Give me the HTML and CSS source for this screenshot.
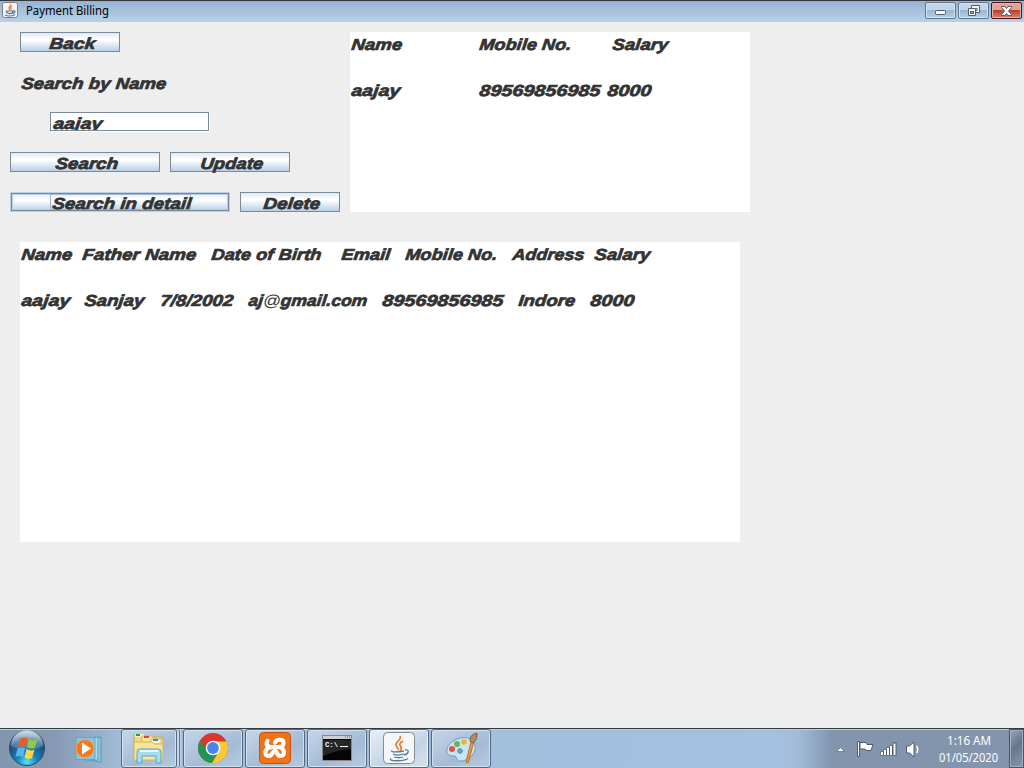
FILE: index.html
```html
<!DOCTYPE html>
<html lang="en">
<head>
<meta charset="utf-8">
<title>Payment Billing</title>
<link rel="stylesheet" href="styles.css">
</head>
<body>
<div class="screen">
  <header class="titlebar">
    <svg class="app-icon" width="16" height="16" viewBox="0 0 32 32"><rect x="1" y="1" width="30" height="30" rx="4" fill="#f3f4f5" stroke="#75818c" stroke-width="2"/><path d="M17 4c3 4-5 6-3 9l2 4M20 8c-4 3-4 4-1 7" fill="none" stroke="#ef7d22" stroke-width="2.5"/><path d="M8 18h14c0 7-12 7-14 0M22 18c6-1 5 4-1 5M6 26c6 3 15 2 20-1" fill="none" stroke="#537c9c" stroke-width="2.4"/></svg>
    <svg class="title" width="90" height="20"><text x="0" y="14" textLength="83" lengthAdjust="spacingAndGlyphs">Payment Billing</text></svg>
    <div class="window-buttons">
      <span class="wbtn"><svg width="31" height="17"><rect x="10.5" y="8.5" width="10" height="4" rx="1" fill="#f7f7f7" stroke="#525d6c"/></svg></span>
      <span class="wbtn"><svg width="31" height="17"><path d="M13.500 3.500h8v7h-8z" fill="#f7f7f7" stroke="#525d6c"/><path d="M16 6.500h3v2h-3" fill="none" stroke="#525d6c"/><path d="M10.500 6.500h7v7h-7z" fill="#f7f7f7" stroke="#525d6c"/><rect x="12.500" y="9.500" width="3" height="2" fill="#9ebbd8" stroke="#525d6c"/></svg></span>
      <span class="wbtn close"><svg width="31" height="17"><path d="M10.500 4.500h3.500l1.500 2 1.500-2h3.500v1l-3 3.500 3 3.500v1H17l-1.500-2-1.500 2h-3.500v-1l3-3.500-3-3.500z" fill="#f8f8f8" stroke="#575665"/></svg></span>
    </div>
  </header>

  <main class="content">
    <div class="top">
      <section class="controls">
        <div class="btn back"><svg class="label" width="98" height="18"><text x="28" y="16" textLength="46" lengthAdjust="spacingAndGlyphs">Back</text></svg></div>
        <svg class="label caption" width="160" height="23"><text x="0" y="17" textLength="145" lengthAdjust="spacingAndGlyphs">Search by Name</text></svg>
        <div class="field"><svg class="label" width="150" height="17"><text x="2" y="16" textLength="49" lengthAdjust="spacingAndGlyphs">aajay</text></svg></div>
        <div class="line">
          <div class="btn search"><svg class="label" width="148" height="18"><text x="44" y="16" textLength="63" lengthAdjust="spacingAndGlyphs">Search</text></svg></div>
          <div class="btn update"><svg class="label" width="118" height="18"><text x="29" y="16" textLength="63" lengthAdjust="spacingAndGlyphs">Update</text></svg></div>
        </div>
        <div class="line detail-line">
          <div class="btn detail"><svg class="label" width="218" height="18"><rect x="39.500" y="1.500" width="140" height="15" fill="none" stroke="#a3b8cc"/><text x="41" y="16" textLength="139" lengthAdjust="spacingAndGlyphs">Search in detail</text></svg></div>
          <div class="btn delete"><svg class="label" width="98" height="18"><text x="22" y="16" textLength="57" lengthAdjust="spacingAndGlyphs">Delete</text></svg></div>
        </div>
      </section>
      <section class="panel summary">
        <div class="row head">
          <svg class="label" width="128" height="23"><text x="0" y="18" textLength="51" lengthAdjust="spacingAndGlyphs">Name</text></svg>
          <svg class="label" width="133" height="23"><text x="0" y="18" textLength="92" lengthAdjust="spacingAndGlyphs">Mobile No.</text></svg>
          <svg class="label" width="70" height="23"><text x="0" y="18" textLength="56" lengthAdjust="spacingAndGlyphs">Salary</text></svg>
        </div>
        <div class="row">
          <svg class="label" width="128" height="23"><text x="0" y="18" textLength="49" lengthAdjust="spacingAndGlyphs">aajay</text></svg>
          <svg class="label" width="128" height="23"><text x="0" y="18" textLength="121" lengthAdjust="spacingAndGlyphs">89569856985</text></svg>
          <svg class="label" width="60" height="23"><text x="0" y="18" textLength="44" lengthAdjust="spacingAndGlyphs">8000</text></svg>
        </div>
      </section>
    </div>
    <section class="panel details">
      <div class="row head">
        <svg class="label" width="61" height="23"><text x="0" y="18" textLength="51" lengthAdjust="spacingAndGlyphs">Name</text></svg>
        <svg class="label" width="129" height="23"><text x="0" y="18" textLength="114" lengthAdjust="spacingAndGlyphs">Father Name</text></svg>
        <svg class="label" width="130" height="23"><text x="0" y="18" textLength="110" lengthAdjust="spacingAndGlyphs">Date of Birth</text></svg>
        <svg class="label" width="64" height="23"><text x="0" y="18" textLength="49" lengthAdjust="spacingAndGlyphs">Email</text></svg>
        <svg class="label" width="107" height="23"><text x="0" y="18" textLength="92" lengthAdjust="spacingAndGlyphs">Mobile No.</text></svg>
        <svg class="label" width="82" height="23"><text x="0" y="18" textLength="72" lengthAdjust="spacingAndGlyphs">Address</text></svg>
        <svg class="label" width="70" height="23"><text x="0" y="18" textLength="56" lengthAdjust="spacingAndGlyphs">Salary</text></svg>
      </div>
      <div class="row">
        <svg class="label" width="63" height="23"><text x="0" y="18" textLength="49" lengthAdjust="spacingAndGlyphs">aajay</text></svg>
        <svg class="label" width="76" height="23"><text x="0" y="18" textLength="60" lengthAdjust="spacingAndGlyphs">Sanjay</text></svg>
        <svg class="label" width="88" height="23"><text x="0" y="18" textLength="73" lengthAdjust="spacingAndGlyphs">7/8/2002</text></svg>
        <svg class="label" width="134" height="23"><text x="0" y="18" textLength="119" lengthAdjust="spacingAndGlyphs">aj<tspan class="thin">@</tspan>gmail.com</text></svg>
        <svg class="label" width="136" height="23"><text x="0" y="18" textLength="121" lengthAdjust="spacingAndGlyphs">89569856985</text></svg>
        <svg class="label" width="72" height="23"><text x="0" y="18" textLength="57" lengthAdjust="spacingAndGlyphs">Indore</text></svg>
        <svg class="label" width="60" height="23"><text x="0" y="18" textLength="44" lengthAdjust="spacingAndGlyphs">8000</text></svg>
      </div>
    </section>
  </main>

  <footer class="taskbar">
    <svg class="start" width="38" height="38" viewBox="0 0 38 38">
      <defs>
        <radialGradient id="orb" cx=".5" cy=".9" r=".85"><stop offset="0" stop-color="#4fe6fb"/><stop offset=".35" stop-color="#1580b8"/><stop offset=".75" stop-color="#1f4d79"/><stop offset="1" stop-color="#7d9dba"/></radialGradient>
        <linearGradient id="gloss" x2="0" y2="1"><stop offset="0" stop-color="#e5f1f7" stop-opacity=".75"/><stop offset="1" stop-color="#bdd5e5" stop-opacity=".2"/></linearGradient>
      </defs>
      <circle cx="19" cy="19" r="17.500" fill="url(#orb)" stroke="#294866"/>
      <path d="M3 17a16 16 0 0 1 32 0c-9 5-22 5-32 0z" fill="url(#gloss)"/>
      <path d="M12 10q4-2.500 7.500-.5l-2 8.500q-4-2-7.500 0z" fill="#ee5a28"/>
      <path d="M21 10q4 2.500 8.500.5l-2.500 8q-4 2-8-.5z" fill="#8fca45"/>
      <path d="M9.500 19.500q4-2 7.500 0l-2 8.500q-4-2-7.500 0z" fill="#5ab4ee"/>
      <path d="M18.500 20q4 2.500 8 .5l-2.500 8.500q-4 2-7.500-.5z" fill="#fed548"/>
    </svg>
    <svg class="media" width="32" height="32" viewBox="0 0 32 32"><path d="M14 6l12-2v25l-12-2z" fill="#8bcae2" stroke="#5399bd"/><path d="M10 5l13-1v23l-13 1z" fill="#aadaea" stroke="#5a9fc2"/><path d="M1 4.500h19v22H1z" fill="#8bc3dd" stroke="#65a5c4"/><circle cx="10" cy="15.500" r="9" fill="#f27a1b" stroke="#f6a45c"/><path d="M7 9.500l9 6-9 6z" fill="#fff"/></svg>
    <nav class="tasks">
      <div class="task stacked"><svg width="34" height="34" viewBox="0 0 34 34"><path d="M2 4h11l2 2h16v22H2z" fill="#f1d783" stroke="#c9a94c"/><path d="M3 3h9v3H3z" fill="#fff3bd"/><path d="M4 3h4v2H4z" fill="#17a438"/><path d="M10 5h10l2 3h9v20H10z" fill="#f7e6a2" stroke="#d4b65c"/><path d="M12 5h5v2h-5z" fill="#d54c2c"/><path d="M19 8h10v5H19z" fill="#fff5cc" stroke="#d7bd69"/><path d="M21 8h5v2h-5z" fill="#278fda"/><path d="M2 11h18l2 2h9v16H2z" fill="#f8e59a" stroke="#d5b65b"/><path d="M5 32V21q0-3 3-3h18q3 0 3 3v11h-5v-7H10v7z" fill="#a5dcee" stroke="#55a7cc"/><path d="M8 20h18" stroke="#e8faff" stroke-width="2"/></svg></div>
      <div class="task"><svg width="32" height="32" viewBox="0 0 32 32"><circle cx="16" cy="16" r="15" fill="#d9372d"/><path d="M3 8.500A15 15 0 0 0 15 31l7.500-12-6.500 3.500a6.500 6.500 0 0 1-6-4z" fill="#219653"/><path d="M16 9.500h13.500A15 15 0 0 1 15 31l7-12a7 7 0 0 0-6-9.500z" fill="#fac935"/><circle cx="16" cy="16" r="7.300" fill="#fff"/><circle cx="16" cy="16" r="5.900" fill="#4885ed"/></svg></div>
      <div class="task"><svg width="32" height="32" viewBox="0 0 32 32"><rect x=".5" y=".5" width="31" height="31" rx="4" fill="#ef7418" stroke="#c94f10"/><path d="M8.500 9C6 13 9 15 13 15h7M12 15.500C5 16 5 24 9.500 24c4.500 0 3-5 7-5.500M16 10.500C17.500 7 24.500 6.500 24.500 11c0 3-2.500 4-4.500 4 6 1 6.500 9 1.500 9-3.500 0-3-3-5-5.500" fill="none" stroke="#fff" stroke-width="4.200" stroke-linecap="round" stroke-linejoin="round"/></svg></div>
      <div class="task"><svg width="32" height="32" viewBox="0 0 32 32"><rect x="1.500" y="3.500" width="29" height="25" fill="#050505" stroke="#888"/><path d="M2 4h28v3H2z" fill="#cbd0d4"/><path d="M24 5h1m1 0h1m1 0h1" stroke="#526c8a"/><path d="M2 8h28v9Q16 18 2 24z" fill="#262626"/><text class="prompt" x="4" y="15" textLength="13" lengthAdjust="spacingAndGlyphs">C:\</text><path d="M19 14.500h8" stroke="#fff"/></svg></div>
      <div class="task active"><svg width="32" height="32" viewBox="0 0 32 32"><rect x=".5" y=".5" width="31" height="31" rx="4" fill="#f5f6f6" stroke="#858b91"/><path d="M17 4c2 4-5 6-4 9 0 2 3 3 2 5M20 9c-5 3-3 4-2 6 1 2 0 3-1 4" fill="none" stroke="#ed762b" stroke-width="1.700"/><path d="M9 18.500c-2 2 6 1.500 12 .5M10 22c3 1.500 8 1 11 0M11 25c3 1 6 1 9 0M22 18c5-1 4 4-1 5M8 26.500c-4 2.500 12 3.500 17 0" fill="none" stroke="#527e9e" stroke-width="1.300"/></svg></div>
      <div class="task"><svg width="34" height="34" viewBox="0 0 34 34"><path d="M3 18c2-10 21-16 27-7 4 8-2 17-12 19-7 1-4-5-8-5-5 0-8-2-7-7z" fill="#c7e5f3" stroke="#6c9dba"/><circle cx="8" cy="18" r="3" fill="#e05343"/><circle cx="13" cy="13" r="3" fill="#68b84b"/><circle cx="20" cy="11" r="2.800" fill="#efb431"/><circle cx="16" cy="20" r="2.300" fill="#72a6c6" stroke="#5388a8"/><path d="M22 31l5-20 2.500 1-5 19q-2 2-2.500 0z" fill="#ee9b42" stroke="#bc7028"/><path d="M26 10q-1-6 7-8 1 6-3.500 10z" fill="#b58a67" stroke="#82603f"/></svg></div>
    </nav>
    <div class="tray">
      <svg class="tray-icons" width="90" height="24"><path d="M3.500 14.500l4-4 4 4z" fill="#fff" stroke="#58687c" stroke-width=".7"/><path d="M24.500 4.500h2v15h-2z" fill="#fff" stroke="#4c5b70"/><path d="M27 5.500h6l1 2h6l-2 6h-5l-1-1.500h-5z" fill="#fff" stroke="#4c5b70"/><path d="M47.500 14.500h3v-2h3v-2h3v-2h3v-3h4v13h-16z" fill="#4c5b70"/><path d="M48 15h2v3h-2zM51 13h2v5h-2zM54 11h2v7h-2zM57 9h2v9h-2zM60.500 6.500h2V18h-2z" fill="#fff"/><path d="M73.500 9h3l4.500-4v15l-4.500-4h-3z" fill="#fff" stroke="#4c5b70"/><path d="M83.500 9q2.500 3.500 0 7" fill="none" stroke="#fff" stroke-width="1.500"/></svg>
      <svg class="clock" width="66" height="38"><text x="12" y="16" textLength="44" lengthAdjust="spacingAndGlyphs">1:16 AM</text><text x="4" y="33" textLength="59" lengthAdjust="spacingAndGlyphs">01/05/2020</text></svg>
    </div>
    <div class="show-desktop"></div>
  </footer>
</div>
</body>
</html>
```
FILE: styles.css
```css
* { box-sizing: border-box; }
body { margin: 0; background: #eee; overflow: hidden; }
svg { display: block; flex: none; }
.screen { width: 1024px; height: 768px; display: flex; flex-direction: column; }

.titlebar { height: 22px; flex: none; display: flex; padding-left: 2px; border-top: 1px solid #35363b; background: linear-gradient(#97b2d1, #b9d1ea); }
.app-icon { margin-top: 1px; }
.title { margin-left: 8px; font: 12px "Noto Sans", "Open Sans", sans-serif; }
.window-buttons { margin-left: auto; padding: 1px 2px 0 0; display: flex; gap: 2px; }
.wbtn { width: 31px; height: 17px; border: 1px solid #63758f; border-radius: 2px; background: linear-gradient(#c2d5e9 0 45%, #98b6d5 50%, #b7d0e8); box-shadow: inset 0 0 0 1px #d3e2f0; }
.wbtn svg { margin: -1px; }
.wbtn.close { border-color: #4a1522; background: linear-gradient(#e5a294 0 45%, #b9412b 50%, #d4836c); box-shadow: inset 0 0 0 1px #e9b3a6; }

.content { flex: 1; padding-top: 10px; }
.top { display: flex; }
.controls { width: 350px; height: 180px; padding-left: 10px; display: flex; flex-direction: column; align-items: flex-start; }
.label { font: italic bold 16px "Liberation Sans", Arial, sans-serif; overflow: visible; }
.label text { fill: #333; stroke: #333; stroke-width: .7px; transform-box: fill-box; transform-origin: 0 80%; transform: skewX(-6deg); }
.label .thin { font-weight: normal; stroke-width: 0; }
.btn { height: 20px; border: 1px solid #7a8a99; background: linear-gradient(#dfe9f3, #fff 35%, #f8fafc 45%, #b8cfe5); }
.back { width: 100px; margin-left: 10px; }
.caption { margin: 20px 0 0 11px; }
.field { width: 159px; height: 19px; margin: 17px 0 0 40px; border: 1px solid #7a8a99; background: #fff; box-shadow: 1px 1px #fff; overflow: hidden; }
.line { display: flex; gap: 10px; margin-top: 21px; }
.detail-line { margin-top: 20px; }
.search { width: 150px; }
.update { width: 120px; }
.detail { width: 220px; border-color: #b8cfe5; box-shadow: inset 0 0 0 1px #7a8a99, inset 0 0 0 2px #b8cfe5; }
.delete { width: 100px; }
.panel { background: #fff; padding-left: 1px; }
.summary { width: 400px; height: 180px; }
.details { width: 720px; height: 300px; margin: 30px 0 0 20px; }
.row { display: flex; height: 23px; }
.row.head { margin-bottom: 23px; }

.taskbar { height: 40px; flex: none; display: flex; border-top: 1px solid #333c46; box-shadow: inset 0 1px #b9cce0; background: linear-gradient(90deg, #8396af 0, #8699b2 55px, #a3bedb 125px, #a5c0de 780px, #a0bad6 800px, #8295ad 832px, #8295ac 100%); }
.start { margin-left: 8px; }
.media { margin: 4px 0 0 29px; }
.tasks { display: flex; gap: 2px; margin-left: 14px; }
.task { width: 60px; height: 39px; display: grid; place-items: center; border: 1px solid #526982; border-radius: 3px; background: linear-gradient(150deg, #c5d6e8, #a5bbd5 60%, #b5cae2); box-shadow: inset 0 0 0 1px #d2e0ef; }
.task svg { margin-top: -1px; }
.task.stacked { width: 56px; margin-right: 4px; box-shadow: inset 0 0 0 1px #d2e0ef, 2px 0 #c4d6e9, 3px 0 #617993, 4px 0 #bdd0e5; }
.task.active { background: linear-gradient(150deg, #e8eff7, #c2d3e7 60%, #d5e1ef); box-shadow: inset 0 0 0 1px #f0f5fb; }
.prompt { font: bold 8px "Liberation Mono", monospace; fill: #fff; }
.tray { display: flex; margin-left: auto; }
.tray-icons { margin-top: 8px; }
.clock { margin-left: 12px; font: 12px "Noto Sans", "Open Sans", sans-serif; fill: #fff; overflow: visible; }
.show-desktop { width: 15px; margin-left: 8px; border: 1px solid #46576a; background: linear-gradient(135deg, #9aa9b9, #64778c 45%, #8799ad); box-shadow: inset 0 0 0 1px #a1afbf; }
```
